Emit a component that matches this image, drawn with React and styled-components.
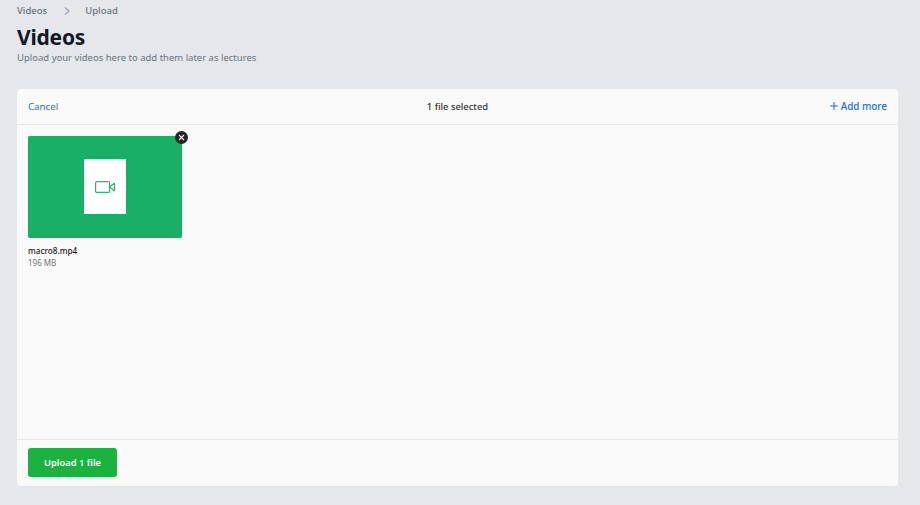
import React from "react";
import styled, { createGlobalStyle } from "styled-components";

const GlobalStyle = createGlobalStyle`
  html, body {
    margin: 0;
    height: 100%;
    background: #e5e7eb;
    font-family: "Noto Sans", "Open Sans", sans-serif;
  }
`;

const Page = styled.div`
  width: 920px;
  height: 505px;
  box-sizing: border-box;
  padding: 0 22px 19px 17px;
  display: flex;
  flex-direction: column;
  overflow: hidden;
`;

const Breadcrumb = styled.nav`
  display: flex;
  align-items: center;
  height: 22px;
  font-size: 9.5px;
  font-weight: 500;
  color: #6b7280;
`;

const Crumb = styled.span`
  line-height: 22px;
`;

const CrumbSeparator = styled.svg`
  width: 6px;
  height: 8px;
  margin: 0 15px 0 17px;
  fill: none;
  stroke: #9ca3af;
  stroke-width: 1.2;
`;

const Title = styled.h1`
  margin: 2px 0 0;
  font-size: 21px;
  line-height: 27px;
  font-weight: 700;
  letter-spacing: -0.2px;
  color: #111827;
`;

const Subtitle = styled.p`
  margin: 0;
  font-size: 9.5px;
  line-height: 13px;
  color: #6b7280;
`;

const Card = styled.section`
  margin-top: 25px;
  flex: 1;
  display: flex;
  flex-direction: column;
  background: #fafafa;
  border-radius: 4px;
`;

const CardHeader = styled.header`
  height: 35px;
  flex: none;
  display: grid;
  grid-template-columns: 1fr auto 1fr;
  align-items: center;
  padding: 0 11px;
  border-bottom: 1px solid #e5e7eb;
`;

const LinkButton = styled.button`
  justify-self: ${(p) => (p.$end ? "end" : "start")};
  display: inline-flex;
  align-items: center;
  gap: 3px;
  margin-top: -1px;
  padding: 0;
  border: 0;
  background: none;
  font-family: inherit;
  font-size: ${(p) => (p.$end ? "9.9px" : "9.7px")};
  font-weight: ${(p) => (p.$end ? 500 : 400)};
  color: #1f6fd6;
`;

const SelectedCount = styled.div`
  font-size: 9.4px;
  font-weight: 500;
  color: #333333;
`;

const FileArea = styled.div`
  flex: 1;
  padding: 11px;
`;

const FileItem = styled.div`
  width: 154px;
`;

const Preview = styled.div`
  position: relative;
  height: 102px;
  border-radius: 2px;
  background: #19af67;
  box-shadow: 0 0 1px rgba(0, 0, 0, 0.3);
  display: flex;
  align-items: center;
  justify-content: center;
`;

const FileSheet = styled.div`
  width: 42px;
  height: 55px;
  box-sizing: border-box;
  margin-bottom: 2px;
  padding-top: 2px;
  border-radius: 1px;
  background: #ffffff;
  display: flex;
  align-items: center;
  justify-content: center;
`;

const RemoveBadge = styled.button`
  position: absolute;
  top: -5px;
  right: -6px;
  width: 13px;
  height: 13px;
  padding: 0;
  border: 0;
  border-radius: 50%;
  background: #252525;
  display: flex;
  align-items: center;
  justify-content: center;
`;

const FileName = styled.div`
  margin-top: 7px;
  font-size: 8.2px;
  line-height: 12px;
  font-weight: 500;
  color: #222222;
`;

const FileSize = styled.div`
  font-size: 8px;
  line-height: 11px;
  color: #757575;
`;

const CardFooter = styled.footer`
  height: 47px;
  flex: none;
  box-sizing: border-box;
  padding: 8px 11px 0;
  border-top: 1px solid #e5e7eb;
`;

const UploadButton = styled.button`
  width: 89px;
  height: 29px;
  border: 0;
  border-radius: 3px;
  background: #1bb240;
  color: #ffffff;
  font-family: inherit;
  font-size: 9.4px;
  font-weight: 600;
`;

function App() {
  return (
    <Page>
      <GlobalStyle />
      <Breadcrumb>
        <Crumb>Videos</Crumb>
        <CrumbSeparator viewBox="0 0 6 8">
          <path d="M1 0.5 L5 4 L1 7.5" />
        </CrumbSeparator>
        <Crumb>Upload</Crumb>
      </Breadcrumb>
      <Title>Videos</Title>
      <Subtitle>Upload your videos here to add them later as lectures</Subtitle>
      <Card>
        <CardHeader>
          <LinkButton>Cancel</LinkButton>
          <SelectedCount>1 file selected</SelectedCount>
          <LinkButton $end>
            <svg width="8" height="8" viewBox="0 0 8 8" fill="none" stroke="#1f6fd6" strokeWidth="1">
              <path d="M4 0V8M0 4H8" />
            </svg>
            Add more
          </LinkButton>
        </CardHeader>
        <FileArea>
          <FileItem>
            <Preview>
              <FileSheet>
                <svg width="20" height="12" viewBox="0 0 20 12" fill="none" stroke="#2fb673" strokeWidth="1.2">
                  <rect x="0.6" y="0.6" width="14" height="10.8" rx="1.2" />
                  <path d="M14.6 6L19.4 2.2V9.8Z" strokeLinejoin="round" />
                </svg>
              </FileSheet>
              <RemoveBadge aria-label="Remove file">
                <svg width="7" height="7" viewBox="0 0 7 7" fill="none" stroke="#eeeeee" strokeWidth="1.1">
                  <path d="M1 1L6 6M6 1L1 6" />
                </svg>
              </RemoveBadge>
            </Preview>
            <FileName>macro8.mp4</FileName>
            <FileSize>196 MB</FileSize>
          </FileItem>
        </FileArea>
        <CardFooter>
          <UploadButton>Upload 1 file</UploadButton>
        </CardFooter>
      </Card>
    </Page>
  );
}

export default App;
